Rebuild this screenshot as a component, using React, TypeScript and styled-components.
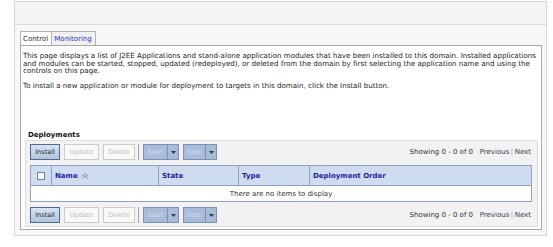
import React from "react";
import styled, { createGlobalStyle } from "styled-components";

const GlobalStyle = createGlobalStyle`
  html, body { margin: 0; padding: 0; background: #ffffff; }
  body { font-family: "DejaVu Sans", Verdana, sans-serif; }
  * { box-sizing: border-box; }
`;

const Page = styled.div`
  width: 553px;
  height: 247px;
  padding: 1px 6px 0 14px;
`;

const Outer = styled.div`
  width: 533px;
  height: 235px;
  border: 1px solid #d6d6d6;
  background: #f7f7f7;
  display: flex;
  flex-direction: column;
`;

const HeaderBar = styled.div`
  height: 23px;
  flex: none;
  background: #f4f4f4;
  border-bottom: 1px solid #dcdcdc;
`;

const Body = styled.div`
  flex: 1;
  display: flex;
  flex-direction: column;
  padding: 6px 4px 5px 5px;
`;

const TabBar = styled.div`
  display: flex;
  align-items: flex-end;
  height: 14px;
  flex: none;
`;

const Tab = styled.div<{ $active?: boolean }>`
  height: 14px;
  padding: 0 3px 0 2px;
  display: flex;
  align-items: center;
  font-size: 7px;
  border: 1px solid #b4b4b4;
  border-bottom: none;
  margin-left: ${(p) => (p.$active ? "0" : "-1px")};
  background: ${(p) => (p.$active ? "#ffffff" : "#f1f1f1")};
  color: ${(p) => (p.$active ? "#333333" : "#2a35b8")};
`;

const ContentBox = styled.div`
  flex: 1;
  background: #ffffff;
  border: 1px solid #a9a9a9;
  padding: 6px 3px 2px 1px;
  display: flex;
  flex-direction: column;
`;

const Intro = styled.p`
  margin: 0 0 0 1px;
  font-size: 7.1px;
  line-height: 7.5px;
  color: #222222;
  white-space: nowrap;
`;

const Section = styled.div`
  margin-top: auto;
  margin-left: 3px;
`;

const SectionTitle = styled.div`
  font-size: 7px;
  font-weight: bold;
  color: #111111;
  margin: 0 0 0 3px;
  height: 11px;
  line-height: 12px;
`;

const Panel = styled.div`
  background: #f2f2f2;
  border: 1px solid #dedede;
  padding: 3px 5px 3px 4px;
  display: flex;
  flex-direction: column;
  gap: 5px;
`;

const Toolbar = styled.div`
  display: flex;
  align-items: center;
  justify-content: space-between;
  height: 16px;
`;

const ButtonGroup = styled.div`
  display: flex;
  align-items: center;
  gap: 4px;
`;

const Button = styled.div<{ $w: number; $enabled?: boolean }>`
  width: ${(p) => p.$w}px;
  height: 16px;
  display: flex;
  align-items: center;
  justify-content: center;
  font-size: 6.5px;
  border: 1px solid ${(p) => (p.$enabled ? "#4d6a97" : "#cbcbcb")};
  background: ${(p) =>
    p.$enabled ? "linear-gradient(#d9e3f0, #b2c3db)" : "#f8f8f8"};
  color: ${(p) => (p.$enabled ? "#1a2740" : "#bdbdbd")};
`;

const Separator = styled.div`
  width: 1px;
  height: 16px;
  background: #a3a3a3;
  margin: 0 0 0 -1px;
`;

const Split = styled.div<{ $w: number }>`
  width: ${(p) => p.$w}px;
  height: 16px;
  display: flex;
  border: 1px solid #7a92b7;
  background: #a9bcd7;
`;

const SplitMain = styled.div`
  flex: 1;
  display: flex;
  align-items: center;
  justify-content: center;
  font-size: 6.5px;
  color: #d3dceb;
  border-right: 1px solid #7a92b7;
`;

const SplitArrow = styled.div`
  width: 10px;
  display: flex;
  align-items: center;
  justify-content: center;
`;

const Pager = styled.div`
  font-size: 7px;
  color: #333333;
  white-space: nowrap;
  display: flex;
  align-items: center;
  margin-right: 1px;
`;

const PagerLink = styled.span`
  color: #333a55;
`;

const PagerBar = styled.span`
  color: #9a9a9a;
  margin: 0 1.5px;
`;

const Table = styled.table`
  width: 502px;
  border-collapse: collapse;
  table-layout: fixed;
  border: 1px solid #8ea2c3;
`;

const HeadCell = styled.th`
  height: 20px;
  background: #cfdbee;
  border: 1px solid #8ea2c3;
  text-align: left;
  padding: 0 0 0 3px;
  font-size: 7px;
  font-weight: bold;
  color: #1d1fa0;
  white-space: nowrap;
`;

const CheckCell = styled(HeadCell)`
  padding: 0;
  text-align: center;
`;

const CheckBox = styled.span`
  display: inline-block;
  width: 8px;
  height: 8px;
  border: 1px solid #6f7f99;
  background: #ffffff;
  vertical-align: middle;
`;

const EmptyCell = styled.td`
  height: 16px;
  background: #ffffff;
  text-align: center;
  font-size: 7px;
  color: #333333;
  padding: 0;
`;

const SortIcon = () => (
  <svg width="8" height="6" viewBox="0 0 8 6" style={{ marginLeft: 3, verticalAlign: "middle" }}>
    <path d="M1 3 L4 0.8 L7 3" fill="none" stroke="#8a8fa8" strokeWidth="1" />
    <path d="M1 5.4 L4 3.2 L7 5.4" fill="none" stroke="#8a8fa8" strokeWidth="1" />
  </svg>
);

const DownArrow = () => (
  <svg width="5" height="3" viewBox="0 0 5 3">
    <path d="M0 0 H5 L2.5 3 Z" fill="#2b3a58" />
  </svg>
);

const ToolbarRow = () => (
  <Toolbar>
    <ButtonGroup>
      <Button $w={30} $enabled>Install</Button>
      <Button $w={35}>Update</Button>
      <Button $w={32}>Delete</Button>
      <Separator />
      <Split $w={36}>
        <SplitMain>Start</SplitMain>
        <SplitArrow><DownArrow /></SplitArrow>
      </Split>
      <Split $w={34}>
        <SplitMain>Stop</SplitMain>
        <SplitArrow><DownArrow /></SplitArrow>
      </Split>
    </ButtonGroup>
    <Pager>
      Showing 0 - 0 of 0&nbsp;&nbsp;&nbsp;
      <PagerLink>Previous</PagerLink>
      <PagerBar>|</PagerBar>
      <PagerLink>Next</PagerLink>
    </Pager>
  </Toolbar>
);

export default function App() {
  return (
    <Page>
      <GlobalStyle />
      <Outer>
        <HeaderBar />
        <Body>
          <TabBar>
            <Tab $active>Control</Tab>
            <Tab>Monitoring</Tab>
          </TabBar>
          <ContentBox>
            <Intro>
              This page displays a list of J2EE Applications and stand-alone application modules that have been installed to this domain. Installed applications
              <br />
              and modules can be started, stopped, updated (redeployed), or deleted from the domain by first selecting the application name and using the
              <br />
              controls on this page.
              <br />
              <br />
              To install a new application or module for deployment to targets in this domain, click the Install button.
            </Intro>
            <Section>
              <SectionTitle>Deployments</SectionTitle>
              <Panel>
                <ToolbarRow />
                <Table>
                  <colgroup>
                    <col style={{ width: 21 }} />
                    <col style={{ width: 107 }} />
                    <col style={{ width: 80 }} />
                    <col style={{ width: 71 }} />
                    <col />
                  </colgroup>
                  <thead>
                    <tr>
                      <CheckCell><CheckBox /></CheckCell>
                      <HeadCell>Name<SortIcon /></HeadCell>
                      <HeadCell>State</HeadCell>
                      <HeadCell>Type</HeadCell>
                      <HeadCell>Deployment Order</HeadCell>
                    </tr>
                  </thead>
                  <tbody>
                    <tr>
                      <EmptyCell colSpan={5}>There are no items to display</EmptyCell>
                    </tr>
                  </tbody>
                </Table>
                <ToolbarRow />
              </Panel>
            </Section>
          </ContentBox>
        </Body>
      </Outer>
    </Page>
  );
}
